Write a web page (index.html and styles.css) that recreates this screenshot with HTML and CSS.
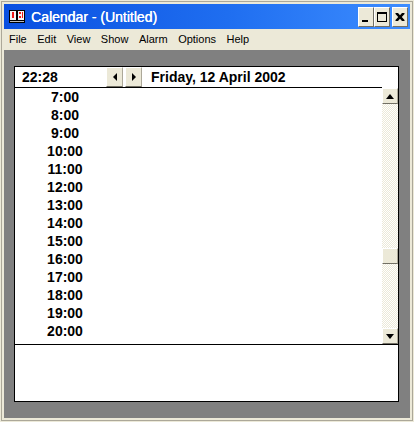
FILE: index.html
```html
<!DOCTYPE html>
<html lang="en">
<head>
<meta charset="utf-8">
<title>Calendar - (Untitled)</title>
<link rel="stylesheet" href="styles.css">
</head>
<body>
<div class="window">
  <header class="titlebar">
    <svg class="appicon" width="16" height="14" viewBox="0 0 16 14">
      <rect x="0" y="0" width="16" height="13" fill="#000"/>
      <rect x="1" y="1" width="6" height="9" fill="#f4f4f4"/>
      <rect x="9" y="1" width="6" height="9" fill="#f4f4f4"/>
      <rect x="3" y="2" width="2" height="6" fill="#f01818"/>
      <rect x="10" y="2" width="2" height="2" fill="#f01818"/>
      <rect x="13" y="2" width="1" height="6" fill="#f01818"/>
      <rect x="10" y="6" width="2" height="2" fill="#f01818"/>
      <rect x="1" y="11" width="14" height="1" fill="#bdbdbd"/>
    </svg>
    <span class="title">Calendar - (Untitled)</span>
    <div class="capbtns">
      <button class="capbtn"><svg width="16" height="18" viewBox="0 0 16 18"><rect x="4" y="12" width="6" height="2" fill="#000"/></svg></button>
      <button class="capbtn"><svg width="16" height="18" viewBox="0 0 16 18"><path d="M3 4h10v10H3z M4 6v7h8V6z" fill="#000" fill-rule="evenodd"/></svg></button>
      <button class="capbtn close"><svg width="16" height="18" viewBox="0 0 16 18"><path d="M3.500 5h2.500l2 2.200L10 5h2.500v1L9.800 9l2.700 3v1H10L8 10.800 6 13H3.500v-1l2.700-3-2.700-3z" fill="#000"/></svg></button>
    </div>
  </header>
  <nav class="menubar">
    <span>File</span><span>Edit</span><span>View</span><span>Show</span><span>Alarm</span><span>Options</span><span>Help</span>
  </nav>
  <main class="client">
    <section class="panel">
      <div class="head">
        <div class="clock">22:28</div>
        <button class="navbtn"><svg width="6" height="8" viewBox="0 0 6 8"><path d="M5 0v8L1 4z" fill="#000"/></svg></button>
        <button class="navbtn"><svg width="6" height="8" viewBox="0 0 6 8"><path d="M1 0v8l4-4z" fill="#000"/></svg></button>
        <div class="date">Friday, 12 April 2002</div>
      </div>
      <div class="middle">
        <div class="hours">
          <div>7:00</div><div>8:00</div><div>9:00</div><div>10:00</div><div>11:00</div><div>12:00</div><div>13:00</div><div>14:00</div><div>15:00</div><div>16:00</div><div>17:00</div><div>18:00</div><div>19:00</div><div>20:00</div>
        </div>
        <div class="scrollbar">
          <button class="sbtn"><svg width="8" height="5" viewBox="0 0 8 5"><path d="M4 0l4 5H0z" fill="#000"/></svg></button>
          <div class="track upper"></div>
          <div class="thumb"></div>
          <div class="track lower"></div>
          <button class="sbtn"><svg width="8" height="5" viewBox="0 0 8 5"><path d="M0 0h8L4 5z" fill="#000"/></svg></button>
        </div>
      </div>
      <div class="notes"></div>
    </section>
  </main>
</div>
</body>
</html>
```
FILE: styles.css
```css
* { box-sizing: border-box; }
html, body { margin: 0; padding: 0; }
body { width: 414px; height: 422px; overflow: hidden; font-family: "Liberation Sans", Arial, sans-serif; }
button { margin: 0; padding: 0; font: inherit; }

.window {
  width: 414px; height: 422px;
  display: flex; flex-direction: column;
  background: #ece9d8;
  border: 4px solid #ece9d8;
  outline: 1px solid #aca899;
  outline-offset: -2px;
}
.titlebar {
  height: 25px; flex: none;
  display: flex; align-items: center;
  padding: 0 2px 0 5px;
  background: linear-gradient(90deg, #0a50e0 0%, #1f6ef0 55%, #3d8dff 100%);
}
.appicon { flex: none; margin-right: 6px; }
.title { color: #fff; font: 400 14px/1 "Liberation Sans", sans-serif; text-shadow: .3px 0 0 #fff; }
.capbtns { margin-left: auto; display: flex; }
.capbtn {
  width: 16px; height: 20px;
  display: flex; align-items: center; justify-content: center;
  background: #ece9d8;
  border: 1px solid;
  border-color: #fff #716f64 #716f64 #fff;
}
.capbtn.close { margin-left: 2px; }
.capbtn svg { flex: none; }

.menubar {
  height: 21px; flex: none;
  display: flex; align-items: center; gap: 10.500px;
  padding: 0 5px;
  font: 11px/1 "Liberation Sans", sans-serif;
  color: #000;
}

.client {
  flex: 1; min-height: 0;
  background: #808080;
  padding: 16px 11px 16px 10px;
  display: flex;
}
.panel {
  width: 385px; height: 336px;
  border: 1px solid #000;
  background: #fff;
  display: flex; flex-direction: column;
}

.head {
  height: 21px; flex: none;
  display: flex; align-items: stretch;
  margin-right: 16px;
  border-bottom: 1px solid #000;
  font: bold 14px/20px "Liberation Sans", sans-serif;
  color: #000;
}
.clock { width: 91px; padding-left: 7px; }
.navbtn {
  width: 17px; flex: none;
  display: flex; align-items: center; justify-content: center;
  background: #ece9d8;
  border: 1px solid;
  border-color: #fff #aca899 #716f64 #fff;
}
.navbtn + .navbtn { margin-left: 2px; }
.date { padding-left: 9px; white-space: nowrap; }

.middle {
  height: 257px; flex: none;
  display: flex;
  border-bottom: 1px solid #000;
}
.hours {
  flex: 1;
  overflow: hidden;
  font: bold 14px/18px "Liberation Sans", sans-serif;
  color: #000;
}
.hours div { width: 100px; text-align: center; }

.scrollbar { width: 16px; flex: none; display: flex; flex-direction: column; }
.sbtn, .thumb {
  height: 16px; flex: none;
  display: flex; align-items: center; justify-content: center;
  background: #ece9d8;
  border: 1px solid;
  border-color: #fff #aca899 #716f64 #fff;
}
.track { background: repeating-conic-gradient(#ece9d8 0 25%, #fff 0 50%) 0 0 / 2px 2px; }
.upper { height: 144px; flex: none; }
.lower { flex: 1; }
.notes { flex: 1; background: #fff; }
```
